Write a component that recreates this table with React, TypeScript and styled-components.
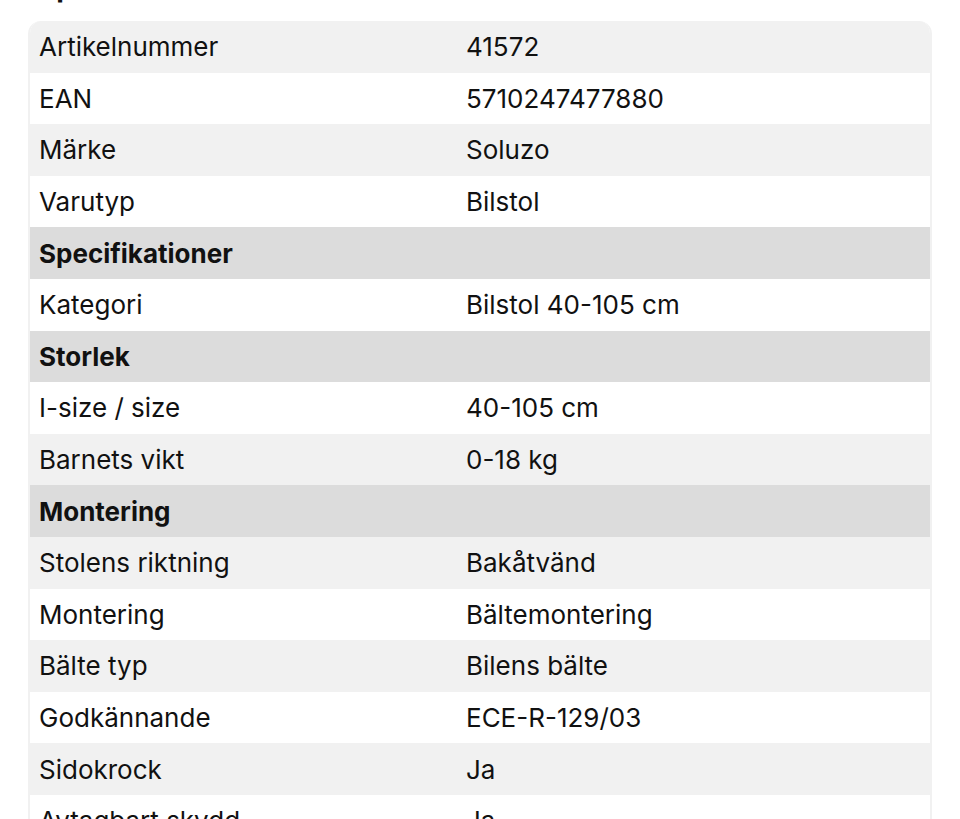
import React from "react";
import styled, { createGlobalStyle } from "styled-components";

const GlobalStyle = createGlobalStyle`
  html, body {
    margin: 0;
    padding: 0;
    background: #ffffff;
  }
  body {
    font-family: Inter, "Noto Sans", "Liberation Sans", sans-serif;
    color: #111111;
  }
`;

const Page = styled.div`
  padding: 0 28px 0 28px;
  overflow: hidden;
  height: 819px;
`;

const Title = styled.h2`
  margin: -30px 0 17px 0;
  font-size: 28px;
  line-height: 34px;
  font-weight: 700;
  height: 34px;
  padding-left: 10px;
`;

const Table = styled.div`
  border: 2px solid #f1f1f1;
  border-top: 0;
  border-radius: 13px;
  overflow: hidden;
  background: #ffffff;
`;

const Row = styled.div<{ $heading?: boolean; $shade?: boolean }>`
  display: grid;
  grid-template-columns: 427px 1fr;
  align-items: center;
  height: 51.6px;
  padding-left: 9px;
  font-size: 26px;
  font-weight: ${(p) => (p.$heading ? 700 : 400)};
  background: ${(p) =>
    p.$heading ? "#dcdcdc" : p.$shade ? "#f1f1f1" : "#ffffff"};
`;

const Cell = styled.span`
  white-space: nowrap;
`;

type Item = { label: string; value?: string; heading?: boolean };

const items: Item[] = [
  { label: "Artikelnummer", value: "41572" },
  { label: "EAN", value: "5710247477880" },
  { label: "Märke", value: "Soluzo" },
  { label: "Varutyp", value: "Bilstol" },
  { label: "Specifikationer", heading: true },
  { label: "Kategori", value: "Bilstol 40-105 cm" },
  { label: "Storlek", heading: true },
  { label: "I-size / size", value: "40-105 cm" },
  { label: "Barnets vikt", value: "0-18 kg" },
  { label: "Montering", heading: true },
  { label: "Stolens riktning", value: "Bakåtvänd" },
  { label: "Montering", value: "Bältemontering" },
  { label: "Bälte typ", value: "Bilens bälte" },
  { label: "Godkännande", value: "ECE-R-129/03" },
  { label: "Sidokrock", value: "Ja" },
  { label: "Avtagbart skydd", value: "Ja" },
];

export default function App() {
  return (
    <>
      <GlobalStyle />
      <Page>
        <Title>Specifikationer</Title>
        <Table>
          {items.map((item, i) => (
            <Row key={i} $heading={item.heading} $shade={i % 2 === 0}>
              <Cell>{item.label}</Cell>
              <Cell>{item.value}</Cell>
            </Row>
          ))}
        </Table>
      </Page>
    </>
  );
}
